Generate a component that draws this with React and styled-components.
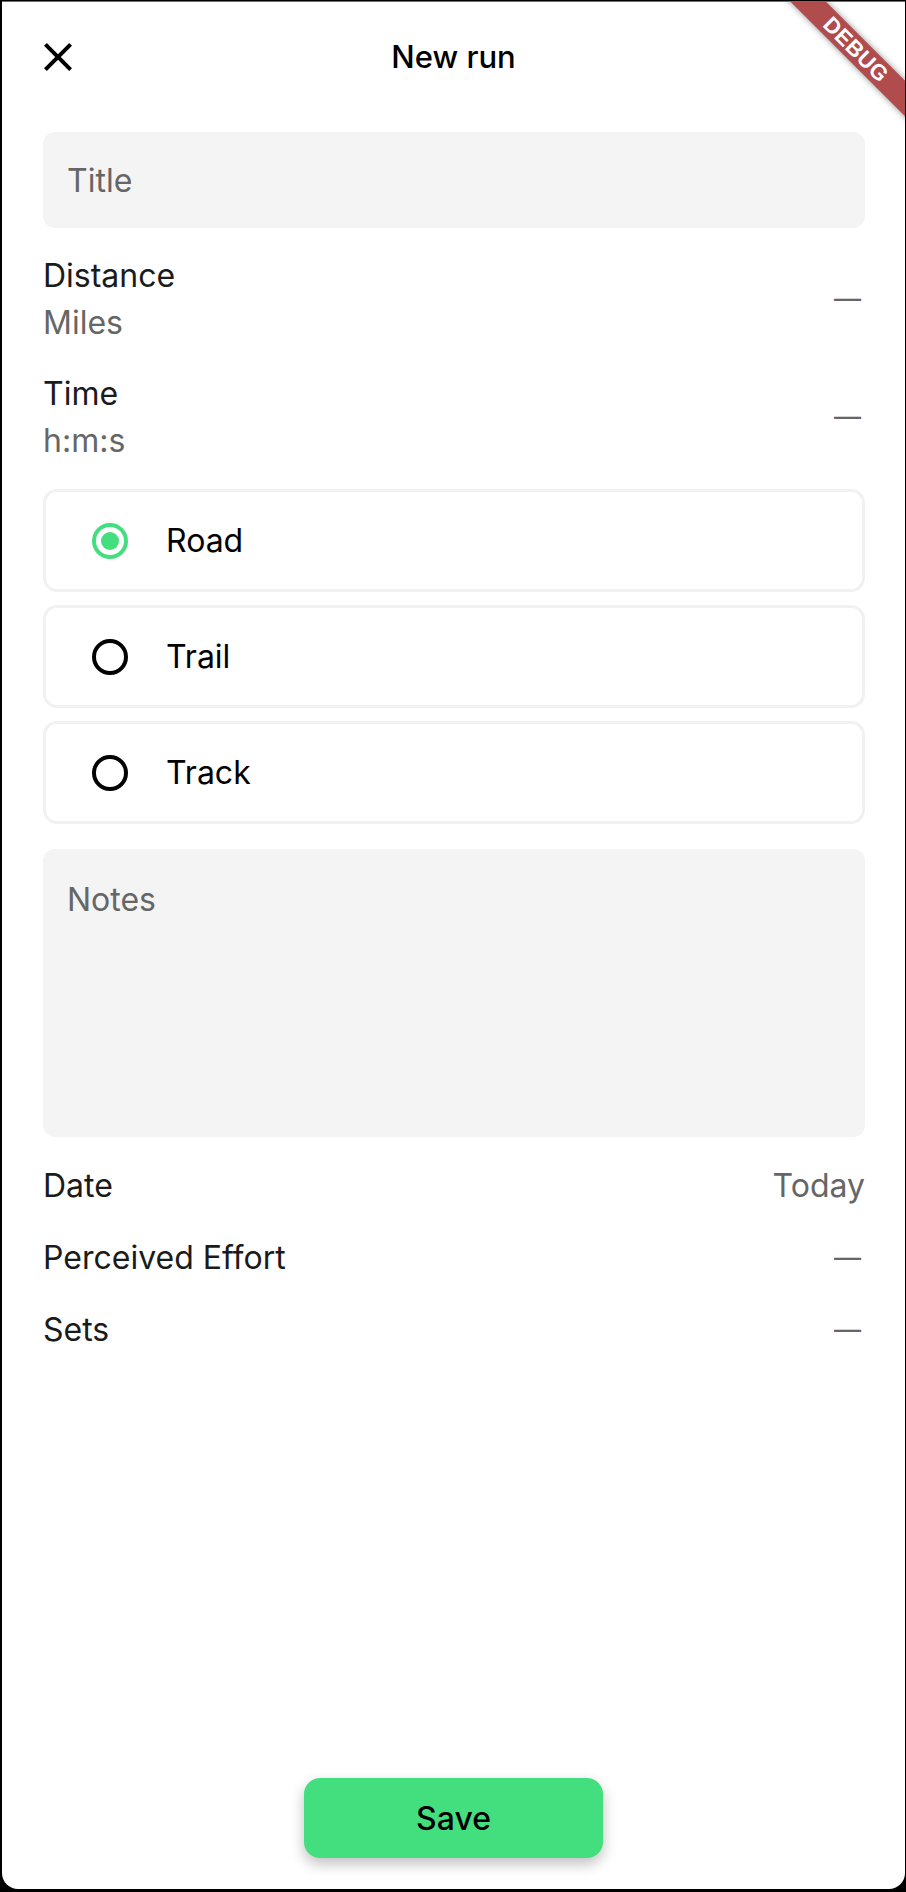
import React from 'react';
import styled, { createGlobalStyle } from 'styled-components';

const Global = createGlobalStyle`
  html, body { margin: 0; padding: 0; background: #000; }
  body { font-family: Inter, "Noto Sans", sans-serif; }
  * { box-sizing: border-box; }
`;

const Window = styled.div`
  position: relative;
  margin: 1px 1px 0 2px;
  height: 1888px;
  background: #fff;
  border-top: 1px solid #6e6e6e;
  border-radius: 0 0 16px 16px;
  overflow: hidden;
  display: flex;
  flex-direction: column;
`;

const Header = styled.header`
  height: 109px;
  flex: none;
  display: grid;
  grid-template-columns: 1fr auto 1fr;
  align-items: center;
`;

const CloseButton = styled.button`
  justify-self: start;
  margin-left: 32px;
  width: 48px;
  height: 48px;
  padding: 0;
  border: none;
  background: none;
  display: grid;
  place-items: center;
  color: #000;
`;

const Title = styled.h1`
  margin: 0;
  font-size: 31px;
  font-weight: 500;
  color: #000;
  line-height: 46px;
`;

const Form = styled.div`
  display: flex;
  flex-direction: column;
  gap: 25px;
  padding: 21px 40px 0 41px;
`;

const TextField = styled.input`
  height: 96px;
  width: 100%;
  border: none;
  outline: none;
  border-radius: 12px;
  background: #f4f4f4;
  padding: 0 24px;
  font: 400 32px/46px Inter, "Noto Sans", sans-serif;
  color: #111;
  &::placeholder { color: #666; }
`;

const TextArea = styled.textarea`
  height: 288px;
  width: 100%;
  border: none;
  outline: none;
  resize: none;
  border-radius: 12px;
  background: #f4f4f4;
  padding: 28px 24px 0;
  font: 400 32px/46px Inter, "Noto Sans", sans-serif;
  color: #111;
  &::placeholder { color: #666; }
`;

const InfoRow = styled.div`
  display: flex;
  align-items: center;
  justify-content: space-between;
  font-size: 32px;
  line-height: ${p => (p.$stacked ? '46.5px' : '47px')};
`;

const LabelStack = styled.div`
  display: flex;
  flex-direction: column;
`;

const Label = styled.span`
  color: #1b1b1b;
`;

const SubLabel = styled.span`
  color: #666;
`;

const Value = styled.span`
  color: #666;
  font-size: ${p => (p.$dash ? '27px' : '32px')};
  margin-right: ${p => (p.$dash ? '4px' : '0')};
`;

const Options = styled.div`
  display: flex;
  flex-direction: column;
  gap: 13px;
`;

const OptionCard = styled.label`
  height: 103px;
  border: 3px solid #f1f1f1;
  border-radius: 14px;
  display: flex;
  align-items: center;
  padding-left: 46px;
  font-size: 32px;
  color: #000;
  cursor: pointer;
`;

const Radio = styled.span`
  width: 36px;
  height: 36px;
  border-radius: 50%;
  border: 4px solid ${p => (p.$checked ? '#43df7f' : '#000')};
  display: grid;
  place-items: center;
  margin-right: 38px;
  flex: none;
  &::after {
    content: '';
    width: 18px;
    height: 18px;
    border-radius: 50%;
    background: ${p => (p.$checked ? '#43df7f' : 'transparent')};
  }
`;

const Spacer = styled.div`
  flex: 1;
`;

const Footer = styled.div`
  display: flex;
  justify-content: center;
  padding-bottom: 31px;
`;

const SaveButton = styled.button`
  width: 299px;
  height: 80px;
  border: none;
  border-radius: 16px;
  background: #43df7f;
  color: #000;
  font: 500 32px Inter, "Noto Sans", sans-serif;
  box-shadow: 0 6px 14px rgba(0, 0, 0, 0.25);
`;

const DebugBanner = styled.div`
  position: absolute;
  left: 754px;
  top: 35px;
  width: 200px;
  height: 25px;
  transform: rotate(45deg);
  background: #b14c4d;
  box-shadow: 0 0 6px rgba(0, 0, 0, 0.45);
  color: #fff;
  font: 900 22px/25px "Liberation Sans", Inter, sans-serif;
  letter-spacing: 0.5px;
  text-align: center;
  pointer-events: none;
`;

const CloseIcon = () => (
  <svg width="48" height="48" viewBox="0 0 24 24" aria-hidden="true">
    <path
      fill="currentColor"
      d="M19 6.41L17.59 5 12 10.59 6.41 5 5 6.41 10.59 12 5 17.59 6.41 19 12 13.41 17.59 19 19 17.59 13.41 12z"
    />
  </svg>
);

const surfaces = ['Road', 'Trail', 'Track'];

export default function App() {
  const [surface, setSurface] = React.useState('Road');
  return (
    <>
      <Global />
      <Window>
        <Header>
          <CloseButton aria-label="Close">
            <CloseIcon />
          </CloseButton>
          <Title>New run</Title>
          <span />
        </Header>
        <Form>
          <TextField placeholder="Title" />
          <InfoRow $stacked>
            <LabelStack>
              <Label>Distance</Label>
              <SubLabel>Miles</SubLabel>
            </LabelStack>
            <Value $dash>—</Value>
          </InfoRow>
          <InfoRow $stacked>
            <LabelStack>
              <Label>Time</Label>
              <SubLabel>h:m:s</SubLabel>
            </LabelStack>
            <Value $dash>—</Value>
          </InfoRow>
          <Options>
            {surfaces.map(s => (
              <OptionCard key={s} onClick={() => setSurface(s)}>
                <Radio $checked={surface === s} />
                {s}
              </OptionCard>
            ))}
          </Options>
          <TextArea placeholder="Notes" />
          <InfoRow>
            <Label>Date</Label>
            <Value>Today</Value>
          </InfoRow>
          <InfoRow>
            <Label>Perceived Effort</Label>
            <Value $dash>—</Value>
          </InfoRow>
          <InfoRow>
            <Label>Sets</Label>
            <Value $dash>—</Value>
          </InfoRow>
        </Form>
        <Spacer />
        <Footer>
          <SaveButton>Save</SaveButton>
        </Footer>
        <DebugBanner>DEBUG</DebugBanner>
      </Window>
    </>
  );
}
